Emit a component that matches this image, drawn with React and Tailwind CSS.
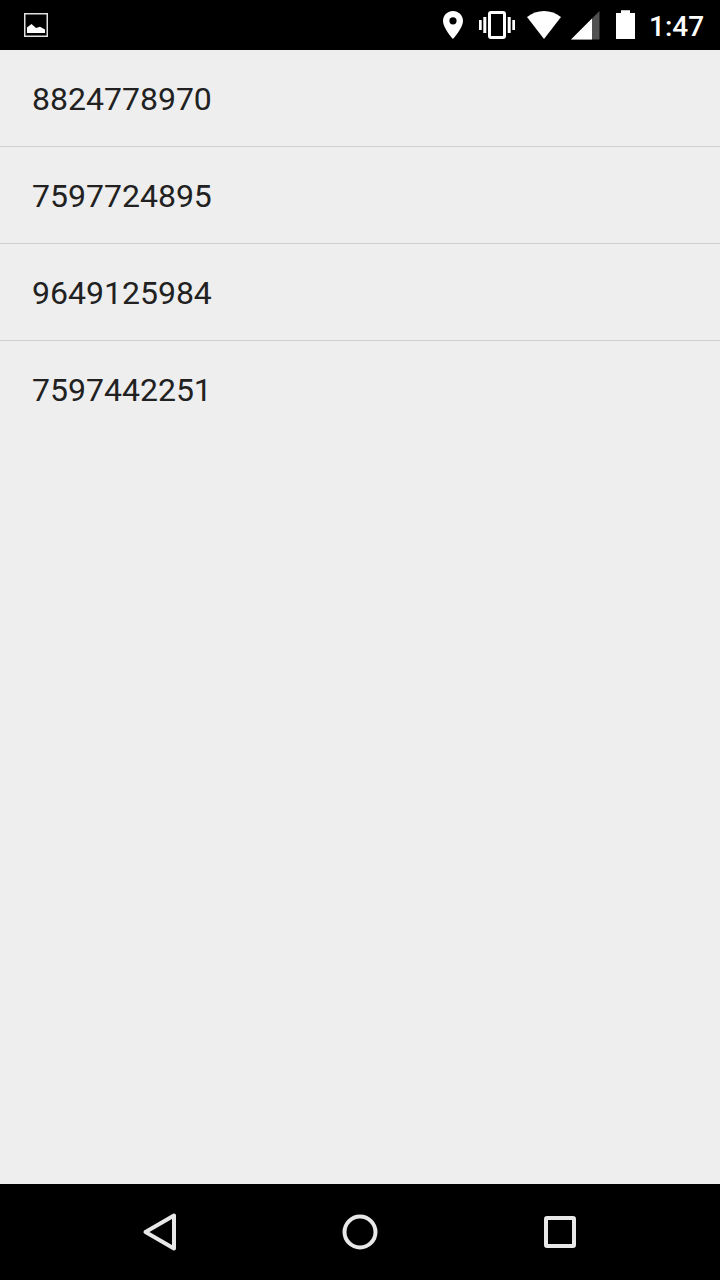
import React from 'react';

const numbers = ['8824778970', '7597724895', '9649125984', '7597442251'];

const PictureIcon = () => (
  <svg width={24} height={24} viewBox="0 0 24 24" className="shrink-0">
    <rect x={0.75} y={0.75} width={22.5} height={22.5} fill="none" stroke="#e0e0e0" strokeWidth={1.5} />
    <path d="M3 20V14.5L7.5 11L12 15L16 13.8L21 16.5V20Z" fill="#fff" />
  </svg>
);

const LocationIcon = () => (
  <svg width={20} height={28} viewBox="0 0 20 28" className="shrink-0">
    <path
      d="M10 0C4.5 0 0 4.4 0 9.8C0 17.2 10 28 10 28S20 17.2 20 9.8C20 4.4 15.5 0 10 0ZM10 13.4A3.6 3.6 0 1 1 10 6.2A3.6 3.6 0 0 1 10 13.4Z"
      fill="#fff"
    />
  </svg>
);

const VibrateIcon = () => (
  <svg width={36} height={28} viewBox="0 0 36 28" className="ml-4 shrink-0" fill="#fff">
    <rect x={10.5} y={1.5} width={15} height={25} rx={1.5} fill="none" stroke="#fff" strokeWidth={3} />
    <rect x={0} y={9} width={2.7} height={10} />
    <rect x={4.3} y={6} width={3} height={16} />
    <rect x={28.7} y={6} width={3} height={16} />
    <rect x={33.3} y={9} width={2.7} height={10} />
  </svg>
);

const WifiIcon = () => (
  <svg width={34} height={28} viewBox="0 0 34 28" className="ml-3 shrink-0">
    <path d="M0 6C5 2.2 10.6 0 17 0S29 2.2 34 6L17 28Z" fill="#fff" />
  </svg>
);

const SignalIcon = () => (
  <svg width={29} height={28} viewBox="0 0 29 28" className="ml-2.5 shrink-0 overflow-visible">
    <path d="M0 28.5L28.5 0V28.5Z" fill="#515151" />
    <path d="M0 28.5L21 7.5V28.5Z" fill="#fff" />
  </svg>
);

const BatteryIcon = () => (
  <svg width={19} height={28} viewBox="0 0 19 28" className="ml-4 shrink-0 overflow-visible">
    <path d="M5 -0.7H14V2H19V28H0V2H5Z" fill="#fff" />
  </svg>
);

const StatusBar = () => (
  <header className="flex h-[50px] shrink-0 items-center justify-between bg-black pl-6 pr-4 text-white">
    <PictureIcon />
    <div className="flex items-center">
      <LocationIcon />
      <VibrateIcon />
      <WifiIcon />
      <SignalIcon />
      <BatteryIcon />
      <span className="ml-3.5 mt-1 w-[55px] whitespace-nowrap text-[28px] font-medium leading-8">1:47</span>
    </div>
  </header>
);

const NavBar = () => (
  <nav className="grid h-24 shrink-0 grid-cols-3 items-center justify-items-center bg-black px-[60px]">
    <svg width={36} height={40} viewBox="0 0 36 40" fill="none" stroke="#e8e8e8" strokeWidth={4}>
      <path d="M3.5 20L32 3.6V36.4Z" strokeLinejoin="round" />
    </svg>
    <svg width={36} height={36} viewBox="0 0 36 36" fill="none" stroke="#e8e8e8" strokeWidth={4}>
      <circle cx={18} cy={18} r={15.5} />
    </svg>
    <svg width={32} height={32} viewBox="0 0 32 32" fill="none" stroke="#e8e8e8" strokeWidth={4}>
      <rect x={2} y={2} width={28} height={28} rx={1} />
    </svg>
  </nav>
);

export default function App() {
  return (
    <div className="flex h-screen w-full flex-col overflow-hidden bg-[#eeeeee] font-['Roboto',sans-serif]">
      <StatusBar />
      <ul className="flex-1 divide-y divide-[#cfcfcf]">
        {numbers.map((number) => (
          <li key={number} className="box-content flex h-24 items-center">
            <span className="px-8 pt-0.5 text-[32px] leading-9 text-[#212121]">{number}</span>
          </li>
        ))}
      </ul>
      <NavBar />
    </div>
  );
}
